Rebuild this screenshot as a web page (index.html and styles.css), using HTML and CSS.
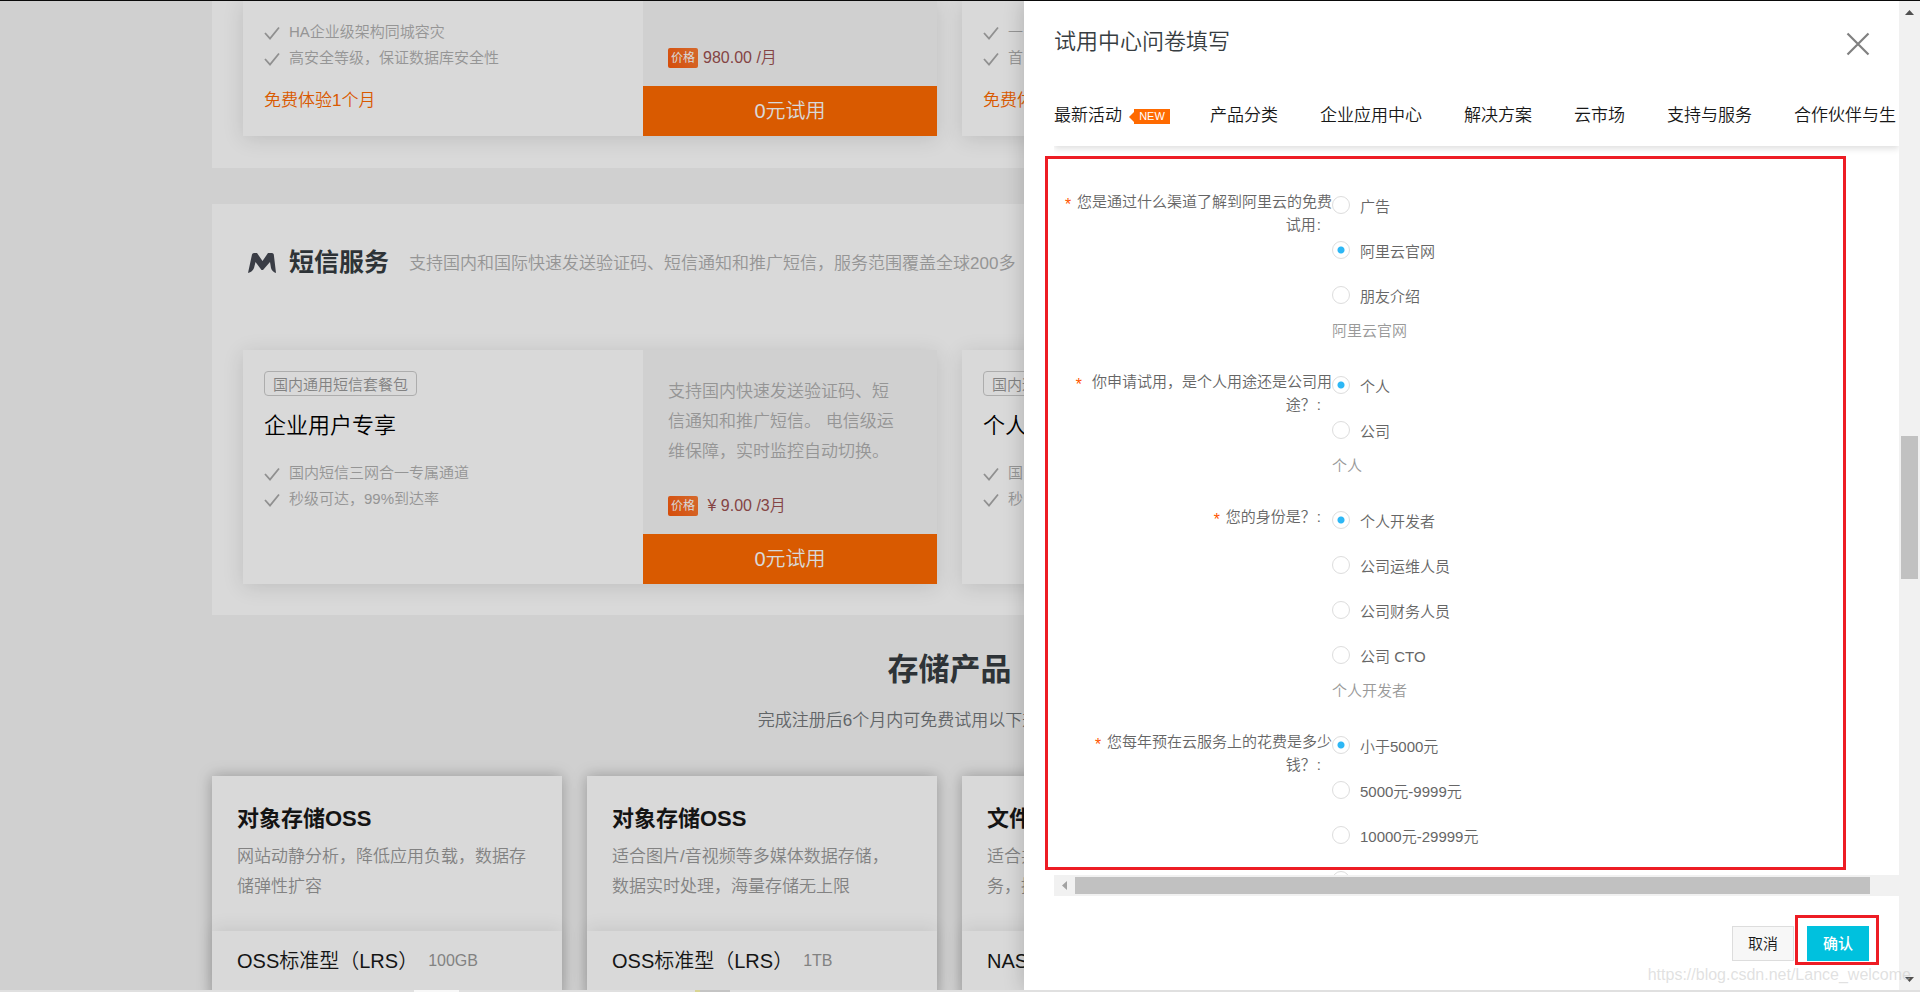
FILE: index.html
```html
<!DOCTYPE html>
<html lang="zh-CN">
<head>
<meta charset="utf-8">
<title>试用中心</title>
<link rel="stylesheet" href="styles.css">
</head>
<body>
<svg class="defs" aria-hidden="true">
  <symbol id="tick" viewBox="0 0 16 14"><path d="M1 7l5 5.500L15 1.500" fill="none" stroke="currentColor" stroke-width="1.800"/></symbol>
</svg>
<div class="screen">
  <div class="view">
    <main class="page">
      <section class="panel panel-cut">
        <div class="offers">
          <article class="offer">
            <div class="offer-body">
              <ul class="ticks">
                <li><svg><use href="#tick"/></svg>HA企业级架构同城容灾</li>
                <li><svg><use href="#tick"/></svg>高安全等级，保证数据库安全性</li>
              </ul>
              <p class="free">免费体验1个月</p>
            </div>
            <div class="offer-side">
              <p class="price"><span class="price-tag">价格</span>980.00 /月</p>
              <button class="try" type="button">0元试用</button>
            </div>
          </article>
          <article class="offer">
            <div class="offer-body">
              <ul class="ticks">
                <li><svg><use href="#tick"/></svg>一</li>
                <li><svg><use href="#tick"/></svg>首</li>
              </ul>
              <p class="free">免费体</p>
            </div>
          </article>
        </div>
      </section>

      <section class="panel">
        <header class="panel-head">
          <svg class="logo" viewBox="0 0 28 20"><path d="M0 20L4 1.500Q4.300 0 6 0h3l5.500 8L20 0h4q1.500 0 1.800 1.500L28 20q-4-1.500-5-5l-1-6-7 8h-1.500L7.500 9 6 15q-1.500 4-6 5z" fill="#454852"/></svg>
          <h2>短信服务</h2>
          <p>支持国内和国际快速发送验证码、短信通知和推广短信，服务范围覆盖全球200多</p>
        </header>
        <div class="offers">
          <article class="offer offer-tall">
            <div class="offer-body">
              <span class="tag">国内通用短信套餐包</span>
              <h3>企业用户专享</h3>
              <ul class="ticks">
                <li><svg><use href="#tick"/></svg>国内短信三网合一专属通道</li>
                <li><svg><use href="#tick"/></svg>秒级可达，99%到达率</li>
              </ul>
            </div>
            <div class="offer-side">
              <p class="offer-text">支持国内快速发送验证码、短信通知和推广短信。 电信级运维保障，实时监控自动切换。</p>
              <p class="price"><span class="price-tag">价格</span>&nbsp;¥ 9.00 /3月</p>
              <button class="try" type="button">0元试用</button>
            </div>
          </article>
          <article class="offer offer-tall">
            <div class="offer-body">
              <span class="tag">国内通</span>
              <h3>个人</h3>
              <ul class="ticks">
                <li><svg><use href="#tick"/></svg>国</li>
                <li><svg><use href="#tick"/></svg>秒</li>
              </ul>
            </div>
          </article>
        </div>
      </section>

      <section class="storage">
        <h2>存储产品</h2>
        <p class="storage-sub">完成注册后6个月内可免费试用以下规格的存储产品</p>
        <div class="goods">
          <article class="good">
            <div class="good-head"><h3>对象存储OSS</h3><p>网站动静分析，降低应用负载，数据存储弹性扩容</p></div>
            <div class="good-row"><span>OSS标准型（LRS）</span><small>100GB</small></div>
          </article>
          <article class="good">
            <div class="good-head"><h3>对象存储OSS</h3><p>适合图片/音视频等多媒体数据存储，数据实时处理，海量存储无上限</p></div>
            <div class="good-row"><span>OSS标准型（LRS）</span><small>1TB</small></div>
          </article>
          <article class="good">
            <div class="good-head"><h3>文件</h3><p>适合共<br>务，提</p></div>
            <div class="good-row"><span>NAS</span></div>
          </article>
          <article class="good"></article>
        </div>
      </section>
    </main>
    <div class="mask"></div>

    <aside class="drawer">
      <header class="drawer-head">
        <h1>试用中心问卷填写</h1>
        <button class="close" type="button" aria-label="关闭"><svg viewBox="0 0 24 24"><path d="M1.500 1.500l21 21M22.500 1.500l-21 21" stroke="#808080" stroke-width="2.200"/></svg></button>
      </header>
      <div class="frame">
        <nav class="nav">
          <a href="#">最新活动<span class="new">NEW</span></a>
          <a href="#">产品分类</a>
          <a href="#">企业应用中心</a>
          <a href="#">解决方案</a>
          <a href="#">云市场</a>
          <a href="#">支持与服务</a>
          <a href="#">合作伙伴与生</a>
        </nav>
        <form class="form" id="survey">
          <div class="q" role="radiogroup" aria-labelledby="l1">
            <p class="q-label" id="l1"><i>*</i> 您是通过什么渠道了解到阿里云的免费试用<b>:</b></p>
            <div>
              <label class="opt"><input type="radio" name="q1"><span>广告</span></label>
              <label class="opt"><input type="radio" name="q1" checked><span>阿里云官网</span></label>
              <label class="opt"><input type="radio" name="q1"><span>朋友介绍</span></label>
              <p class="hint">阿里云官网</p>
            </div>
          </div>
          <div class="q" role="radiogroup" aria-labelledby="l2">
            <p class="q-label" id="l2"><i>*</i> &nbsp;你申请试用，是个人用途还是公司用途？<b>:</b></p>
            <div>
              <label class="opt"><input type="radio" name="q2" checked><span>个人</span></label>
              <label class="opt"><input type="radio" name="q2"><span>公司</span></label>
              <p class="hint">个人</p>
            </div>
          </div>
          <div class="q" role="radiogroup" aria-labelledby="l3">
            <p class="q-label" id="l3"><i>*</i> 您的身份是？<b>:</b></p>
            <div>
              <label class="opt"><input type="radio" name="q3" checked><span>个人开发者</span></label>
              <label class="opt"><input type="radio" name="q3"><span>公司运维人员</span></label>
              <label class="opt"><input type="radio" name="q3"><span>公司财务人员</span></label>
              <label class="opt"><input type="radio" name="q3"><span>公司 CTO</span></label>
              <p class="hint">个人开发者</p>
            </div>
          </div>
          <div class="q" role="radiogroup" aria-labelledby="l4">
            <p class="q-label" id="l4"><i>*</i> 您每年预在云服务上的花费是多少钱？<b>:</b></p>
            <div>
              <label class="opt"><input type="radio" name="q4" checked><span>小于5000元</span></label>
              <label class="opt"><input type="radio" name="q4"><span>5000元-9999元</span></label>
              <label class="opt"><input type="radio" name="q4"><span>10000元-29999元</span></label>
              <label class="opt"><input type="radio" name="q4" aria-label="更多"></label>
            </div>
          </div>
        </form>
        <div class="hbar"><svg viewBox="0 0 21 21"><path d="M13 6v9l-5-4.500z" fill="#a3a3a3"/></svg><div class="hthumb"></div></div>
      </div>
      <footer class="actions">
        <button class="btn" type="button">取消</button>
        <button class="btn btn-main" type="submit" form="survey">确认</button>
      </footer>
      <div class="mark mark-form"></div>
      <div class="mark mark-ok"></div>
    </aside>
  </div>
  <div class="vbar">
    <svg viewBox="0 0 21 21"><path d="M6 14h9l-4.500-5z" fill="#505050"/></svg>
    <div class="vthumb"></div>
    <svg viewBox="0 0 21 21"><path d="M6 8h9l-4.500 5z" fill="#505050"/></svg>
  </div>
  <div class="strip"></div>
  <p class="watermark">https://blog.csdn.net/Lance_welcome</p>
</div>
</body>
</html>
```
FILE: styles.css
```css
* { box-sizing: border-box; margin: 0; padding: 0; }
body {
  font-family: "Liberation Sans", "Noto Sans CJK SC", sans-serif;
  font-size: 15px;
  font-weight: 350;
  line-height: 26px;
  overflow: hidden;
}
button, input { font: inherit; }
ul { list-style: none; }
.defs { position: absolute; width: 0; height: 0; }

.screen {
  position: relative;
  display: grid;
  grid-template-columns: minmax(0, 1fr) 21px;
  grid-template-rows: minmax(0, 1fr) 2px;
  height: 100vh;
  border-top: 1px solid #0a0a0a;
}
.view { position: relative; overflow: hidden; background: #f5f5f5; }
.page { max-width: 1475px; margin: 0 auto; }
.mask { position: absolute; inset: 0; background: rgba(0, 0, 0, .15); }

/* product panels */
.panel { background: #fff; padding: 0 31px 31px; margin-bottom: 36px; }
.panel + .storage { margin-top: -36px; }
.offers { display: grid; grid-template-columns: 1fr 1fr; gap: 25px; }
.offer { display: flex; min-height: 135px; background: #fff; box-shadow: 0 3px 20px rgba(0, 0, 0, .12); }
.panel-cut { padding-bottom: 32px; }
.offer-tall { min-height: 234px; }
.offer-body { flex: 1; padding: 18px 22px 0 21px; }
.offer-tall .offer-body { padding-top: 21px; }
.offer-side { display: flex; flex-direction: column; width: 294px; background: #f5f5f5; }
.ticks { color: #b0b0b0; }
.ticks li { display: flex; align-items: center; gap: 9px; }
.ticks svg { width: 16px; height: 14px; margin-top: 1px; color: #aaa; }
.free { margin-top: 15px; font-size: 17px; line-height: 30px; color: #ff6a00; }
.price { display: flex; align-items: center; gap: 5px; margin: auto 0 18px 25px; font-size: 16px; line-height: 20px; color: #9c5050; }
.price-tag { width: 30px; border-radius: 2px; background: linear-gradient(60deg, #fb5a0c, #fb7c34); color: #fff; font-size: 12px; font-weight: 400; text-align: center; }
.try { height: 50px; border: 0; background: #ff6a00; color: #fff; font-size: 20px; }
.offer-text { padding: 27px 35px 0 25px; font-size: 17px; line-height: 30px; color: #b0b0b0; }
.tag { display: block; width: fit-content; height: 25px; padding: 0 8px; border: 1px solid #ccc; border-radius: 4px; color: #999; }
.offer h3 { margin: 15px 0 19px; font-size: 22px; font-weight: 350; line-height: 30px; color: #000; }
.panel-head { display: flex; align-items: center; height: 146px; padding: 0 0 30px 5px; white-space: nowrap; }
.logo { width: 28px; height: 20px; margin-top: 2px; }
.panel-head h2 { margin: 0 20px 0 13px; font-size: 25px; color: #373d41; }
.panel-head p { padding-top: 4px; font-size: 17px; color: #b0b0b0; }

.storage { padding-top: 35px; text-align: center; }
.storage h2 { font-size: 31px; line-height: 40px; color: #373d41; }
.storage-sub { margin: 16px 0 40px; font-size: 17px; line-height: 30px; color: #73777a; }
.goods { display: grid; grid-template-columns: repeat(4, 1fr); gap: 25px; text-align: left; line-height: 30px; }
.good { min-height: 320px; background: #fff; box-shadow: 0 0 14px rgba(0, 0, 0, .28); }
.good-head { padding: 28px 25px 29px; }
.good-head h3 { margin-bottom: 8px; font-size: 22px; color: #181818; }
.good-head p { min-height: 60px; padding-right: 9px; font-size: 17px; color: #999; }
.good-row { display: flex; gap: 10px; padding: 15px 25px; box-shadow: 0 -4px 16px rgba(0, 0, 0, .08); font-size: 20px; color: #181818; }
.good-row small { font-size: 16px; color: #999; }

/* questionnaire drawer */
.drawer {
  position: absolute;
  inset: 0 0 0 auto;
  display: flex;
  flex-direction: column;
  width: 875px;
  padding-left: 30px;
  background: #fff;
  box-shadow: 0 0 20px rgba(0, 0, 0, .2);
}
.drawer-head { display: flex; justify-content: space-between; padding: 26px 29px 0 0; }
.drawer-head h1 { font-size: 22px; font-weight: 350; line-height: 30px; color: #373d41; }
.close { width: 24px; height: 24px; margin-top: 5px; border: 0; background: none; }
.close svg { display: block; }
.frame { flex: 1; display: flex; flex-direction: column; min-height: 0; overflow: hidden; }
.nav { display: flex; gap: 42px; margin-top: 26px; padding: 20px 0 17px; box-shadow: 0 3px 6px rgba(0, 0, 0, .12); clip-path: inset(0 0 -12px 0); white-space: nowrap; }
.nav a { display: flex; align-items: center; font-size: 17px; color: #181818; text-decoration: none; }
.new { position: relative; width: 36px; height: 15px; margin: 0 -2px 0 12px; background: #ff6a00; color: #fff; font-size: 11px; font-weight: 400; line-height: 15px; text-align: center; }
.new::before { content: ""; position: absolute; left: -5px; top: 3px; border: solid transparent; border-width: 5px 5px 5px 0; border-right-color: #ff6a00; }
.form { flex: 1; min-height: 0; overflow: hidden; padding-top: 36px; color: #666; }
.q { display: grid; grid-template-columns: 278px 1fr; }
.q-label { padding-top: 9px; line-height: 22px; text-align: right; }
.q-label i { font: 400 16px/16px "Liberation Mono", monospace; vertical-align: -3px; color: #ff5500; }
.q-label b { margin: 0 11px 0 1px; font-weight: 350; }
.opt { display: flex; align-items: center; gap: 10px; height: 45px; }
.opt span { padding-top: 4px; }
.opt input { appearance: none; width: 18px; height: 18px; border: 1px solid #ddd; border-radius: 50%; background: #fff; }
.opt input:checked { background: radial-gradient(circle, #2db7f5 3px, #fff 4px); }
.hint { margin-bottom: 18px; line-height: 27px; color: #999; }
.hbar { display: flex; height: 21px; background: #f1f1f1; }
.hbar svg { width: 21px; height: 21px; }
.hthumb { flex: 1; margin: 2px 29px 2px 0; background: #c1c1c1; }
.actions { display: flex; justify-content: flex-end; gap: 13px; padding: 30px 30px 29px 0; }
.btn { width: 62px; height: 35px; border: 1px solid #ddd; background: #f7f7f7; color: #181818; }
.btn-main { border-color: #00c1de; background: #00c1de; color: #fff; font-weight: 500; }

/* annotations */
.mark { position: absolute; border: 3px solid #ed1c24; pointer-events: none; }
.mark-form { inset: 155px 53px 120px 21px; }
.mark-ok { right: 20px; bottom: 25px; width: 84px; height: 50px; }
.watermark { position: absolute; right: 9px; bottom: 4px; font: 400 16px/26px "Liberation Sans", sans-serif; color: rgba(200, 200, 200, .55); pointer-events: none; }

.vbar { display: flex; flex-direction: column; background: #f1f1f1; }
.vbar svg { width: 21px; height: 21px; flex: none; }
.vthumb { height: 143px; margin: 414px 2px auto; background: #c1c1c1; }
.strip { grid-column: 1 / -1; background: linear-gradient(90deg, #e0e0e0 414px, #f8f8f8 414px 459px, #e0e0e0 459px 695px, #d8d492 695px 700px, #c4c4c4 700px 730px, #e0e0e0 730px); }
```
